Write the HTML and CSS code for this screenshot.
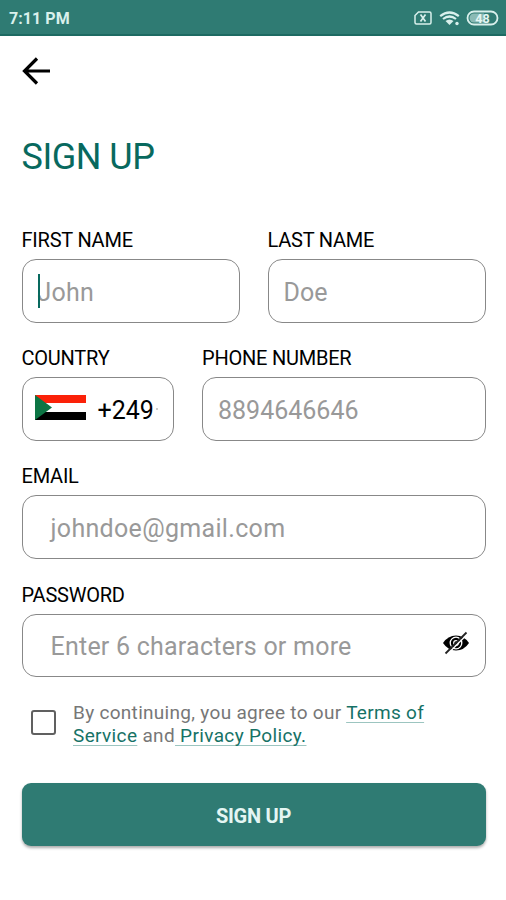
FILE: index.html
```html
<!DOCTYPE html>
<html lang="en">
<head>
<meta charset="utf-8">
<title>Sign up</title>
<link rel="stylesheet" href="styles.css">
</head>
<body>
<header class="status">
  <span class="time">7:11 PM</span>
  <svg class="status-icons" width="86" height="18" viewBox="0 0 86 18" fill="none" stroke="#d9f0ec">
    <path d="M5.500 3H16.500Q18 3 18 4.500V13.500Q18 15 16.500 15H3.500Q2 15 2 13.500V6.500Z" stroke-width="1.500"/>
    <path d="M7.500 5.500L12.500 12.500M12.500 5.500L7.500 12.500" stroke-width="1.700"/>
    <path d="M27.200 7.200Q36.500 -0.200 45.800 7.200M30 10Q36.500 5 43 10" stroke-width="2.200"/>
    <path d="M32.500 12Q36.500 9 40.500 12L36.500 16Z" fill="#d9f0ec" stroke="none"/>
    <circle cx="44" cy="14.500" r="1.700" fill="#d9f0ec" stroke="none"/>
    <rect x="54.500" y="2.500" width="30" height="13" rx="6.500" stroke-width="1.800"/>
    <path d="M61 4.500H71V13.500H61A4.500 4.500 0 0 1 61 4.500Z" fill="#8bbbb5" stroke="none"/>
    <text class="battery" x="69.500" y="13.500" text-anchor="middle">48</text>
  </svg>
</header>
<main>
  <svg class="back" width="30" height="28" viewBox="0 0 30 28" fill="none" stroke="#000" stroke-width="3.200">
    <path d="M28 14H3M15 1.500L2.500 14L15 26.500"/>
  </svg>
  <h1>SIGN UP</h1>
  <form>
    <div class="row names">
      <div class="field"><div class="label">FIRST NAME</div><div class="box"><i class="caret"></i><span class="hint name">John</span></div></div>
      <div class="field"><div class="label">LAST NAME</div><div class="box"><span class="hint">Doe</span></div></div>
    </div>
    <div class="row phone">
      <div class="field"><div class="label">COUNTRY</div>
        <div class="box country">
          <svg width="51" height="25" viewBox="0 0 51 25"><path fill="#fff" d="M0 0H51V25H0Z"/><path fill="#fb2108" d="M0 0H51V8H0Z"/><path fill="#000" d="M0 17H51V25H0Z"/><path fill="#0c7544" d="M0 0L17 12.500L0 25Z"/></svg>
          <span class="code">+249</span><i class="dot"></i>
        </div></div>
      <div class="field"><div class="label">PHONE NUMBER</div><div class="box"><span class="hint">8894646646</span></div></div>
    </div>
    <div class="row"><div class="field"><div class="label">EMAIL</div><div class="box wide"><span class="hint email">johndoe@gmail.com</span></div></div></div>
    <div class="row"><div class="field"><div class="label">PASSWORD</div><div class="box wide"><span class="hint password">Enter 6 characters or more</span>
      <svg class="eye" width="28" height="24" viewBox="0 0 28 24" fill="none">
        <path d="M1 12Q6 4.500 14 4.500T27 12Q22 19.500 14 19.500T1 12Z" fill="#000"/>
        <circle cx="14" cy="12" r="5.800" stroke="#fff" stroke-width="1.300"/>
        <circle cx="14" cy="12" r="2.300" stroke="#fff" stroke-width="1.200"/>
        <path d="M5 23.500L26 2.500" stroke="#fff" stroke-width="1.500"/>
        <path d="M3.500 22.500L24.500 1.500" stroke="#222" stroke-width="1.800"/>
      </svg></div></div></div>
    <div class="terms">
      <span class="check"></span>
      <p><span class="first-line">By continuing, you agree to our <a>Terms of</a></span><br><span class="second-line"><a>Service</a> and<a> Privacy Policy.</a></span></p>
    </div>
    <div class="submit"><span>SIGN UP</span></div>
  </form>
</main>
</body>
</html>
```
FILE: styles.css
```css
* { box-sizing: border-box; }
body { margin: 0; height: 900px; background: #fff; font-family: Roboto, "Liberation Sans", sans-serif; color: #000; overflow: hidden; }
.status { height: 36px; background: #2f7b73; border-bottom: 2px solid #1d6a62; display: flex; justify-content: space-between; align-items: center; padding: 2px 7px 0 9px; color: #d9f0ec; }
.time { font-size: 16px; line-height: 20px; font-weight: 700; margin-top: 2px; letter-spacing: 0.050px; }
.battery { font-size: 12.500px; font-weight: 700; fill: #e4f6f3; stroke: none; }
main { padding: 21px 20.500px 0 21.500px; }
.back { display: block; }
h1 { margin: 50px 0 0; font-size: 36px; line-height: 44px; font-weight: 400; letter-spacing: -0.500px; color: #08695e; white-space: nowrap; }
form { margin-top: 49px; }
.row { display: flex; height: 118.200px; }
.names, .phone { gap: 28px; }
.field { flex: 1; min-width: 0; }
.phone .field:first-child { flex: 0 0 152.500px; }
.label { height: 31px; line-height: 24px; font-size: 20px; letter-spacing: -0.220px; white-space: nowrap; }
.box { height: 63.500px; border: 1.500px solid #888; border-radius: 14px; display: flex; align-items: center; padding: 4px 15px 0; position: relative; }
.wide { padding: 4px 15px 0 28px; }
.hint { font-size: 25px; line-height: 30px; color: #999; white-space: nowrap; }
.name { letter-spacing: 0.250px; }
.email { letter-spacing: 0.320px; }
.password { letter-spacing: 0.230px; }
.caret { position: absolute; left: 15px; top: 14px; width: 2px; height: 34px; background: #08695e; }
.country { padding: 0 12px; }
.country svg { flex: none; margin-top: -2px; }
.code { font-size: 25px; line-height: 30px; margin: 5px 0 0 12px; }
.dot { width: 2px; height: 2px; background: #ccc; margin-left: 2px; flex: none; }
.eye { margin-left: auto; margin-top: -8px; flex: none; }
.terms { display: flex; height: 68px; padding-left: 9.500px; }
.check { width: 25px; height: 25px; margin-top: 9px; border: 2px solid #606060; border-radius: 3px; flex: none; }
.terms p { margin: 0 0 0 17px; font-size: 19px; line-height: 23px; color: #777; white-space: nowrap; }
.first-line { letter-spacing: 0.300px; }
.second-line { letter-spacing: 0.360px; }
.terms a { color: #167266; text-decoration: underline; text-decoration-color: #9cc5c0; text-underline-offset: 3px; text-decoration-skip-ink: none; }
.submit { margin-top: 14px; height: 63px; border-radius: 9px; background: #2f7b73; color: #e4f6f3; display: flex; align-items: center; justify-content: center; font-size: 20px; font-weight: 700; letter-spacing: -0.280px; box-shadow: 0 2px 3px #0005; padding-top: 3px; }
```
